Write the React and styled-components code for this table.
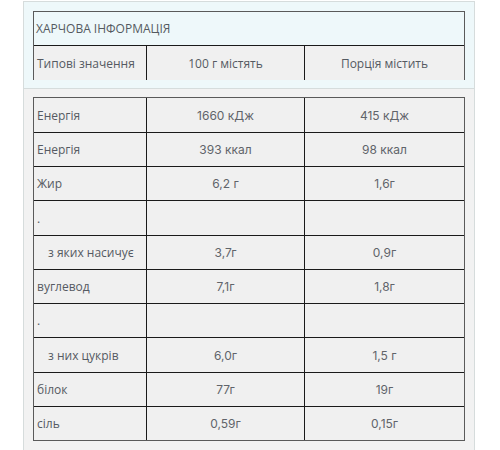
import React from 'react';
import styled, { createGlobalStyle } from 'styled-components';

const GlobalStyle = createGlobalStyle`
  *, *::before, *::after {
    box-sizing: border-box;
  }
  body {
    margin: 0;
    background: #fff;
    font-family: "Open Sans", "Liberation Sans", sans-serif;
  }
`;

const rows = [
  { label: 'Енергія', per100: '1660 кДж', portion: '415 кДж' },
  { label: 'Енергія', per100: '393 ккал', portion: '98 ккал' },
  { label: 'Жир', per100: '6,2 г', portion: '1,6г' },
  { label: '.', per100: '', portion: '' },
  { label: 'з яких насичує', per100: '3,7г', portion: '0,9г', indent: true },
  { label: 'вуглевод', per100: '7,1г', portion: '1,8г' },
  { label: '.', per100: '', portion: '' },
  { label: 'з них цукрів', per100: '6,0г', portion: '1,5 г', indent: true },
  { label: 'білок', per100: '77г', portion: '19г' },
  { label: 'сіль', per100: '0,59г', portion: '0,15г' }
];

// ========== Basic Components =============
const Panel = styled.div`
  margin: 1px 0 0 23px;
  width: 452px;
  border: 1px solid #d6dcdc;
`;

const HeadSection = styled.div`
  background: #eef8fa;
  padding: 9px 9px 8px;
  border-bottom: 1px solid #d6dcdc;
`;

const BodySection = styled.div`
  background: #f2f2f2;
  padding: 8px 9px 10px;
`;

const Table = styled.div`
  border: 1px solid #5a5a5a;
  border-bottom: ${(p) => (p.open ? 'none' : '1px solid #5a5a5a')};
`;

const Row = styled.div`
  display: grid;
  grid-template-columns: 112px 158px 1fr;
  height: ${(p) => p.h}px;
  background: ${(p) => p.bg || '#f0f0f0'};
  & + & {
    border-top: 1px solid #1a1a1a;
  }
`;

const Title = styled.div`
  grid-column: 1 / -1;
  display: flex;
  align-items: center;
  padding-left: 2px;
  font-size: 12px;
  color: #555a60;
`;

const Cell = styled.div`
  display: flex;
  align-items: center;
  justify-content: ${(p) => (p.center ? 'center' : 'flex-start')};
  padding-left: ${(p) => (p.center ? 0 : p.indent ? 14 : 3)}px;
  font-family: ${(p) => (p.num ? 'Inter, "Noto Sans", sans-serif' : '"Open Sans", sans-serif')};
  font-size: 12px;
  color: ${(p) => (p.num ? '#60646a' : '#555a62')};
  white-space: nowrap;
  & + & {
    border-left: 1px solid #1a1a1a;
  }
`;

export default function App() {
  return (
    <>
      <GlobalStyle />
      <Panel>
        <HeadSection>
          <Table open>
            <Row h={33} bg='#eef8fa'>
              <Title>ХАРЧОВА ІНФОРМАЦІЯ</Title>
            </Row>
            <Row h={35}>
              <Cell>Типові значення</Cell>
              <Cell center>100 г містять</Cell>
              <Cell center>Порція містить</Cell>
            </Row>
          </Table>
        </HeadSection>
        <BodySection>
          <Table>
            {rows.map((r, i) => (
              <Row key={i} h={i === 3 || i === 7 ? 35 : 34}>
                <Cell indent={r.indent}>{r.label}</Cell>
                <Cell center num>{r.per100}</Cell>
                <Cell center num>{r.portion}</Cell>
              </Row>
            ))}
          </Table>
        </BodySection>
      </Panel>
    </>
  );
}
